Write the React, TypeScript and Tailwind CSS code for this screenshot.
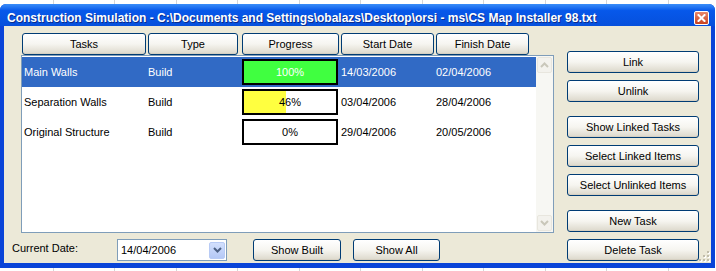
import clsx from "clsx";

const ui = "font-['Liberation_Sans',Arial,sans-serif]";

const gridCols = [54, 61, 62, 61, 62, 61, 62, 61, 62, 61, 62, 61];

const rows = [
  { name: "Main Walls", type: "Build", pct: 100, fill: "bg-[#40ff40]", start: "14/03/2006", finish: "02/04/2006", selected: true },
  { name: "Separation Walls", type: "Build", pct: 46, fill: "bg-[#ffff40]", start: "03/04/2006", finish: "28/04/2006", selected: false },
  { name: "Original Structure", type: "Build", pct: 0, fill: "bg-[#ffff40]", start: "29/04/2006", finish: "20/05/2006", selected: false },
];

function XpButton({ label, className }: { label: string; className?: string }) {
  return (
    <div
      className={clsx(
        "flex h-[22px] shrink-0 items-center justify-center rounded-[3px] border border-[#003c74] bg-linear-to-b from-white via-[#f6f5f0] to-[#dcd8cb] text-[11px] leading-none text-black shadow-[inset_0_-1px_0_#d6d0c2]",
        className,
      )}
    >
      {label}
    </div>
  );
}

function Chevron({ up, color }: { up?: boolean; color: string }) {
  return (
    <svg width="9" height="6" viewBox="0 0 9 6">
      <path d={up ? "M1 5 L4.5 1.5 L8 5" : "M1 1 L4.5 4.5 L8 1"} fill="none" stroke={color} strokeWidth="2" />
    </svg>
  );
}

export default function App() {
  return (
    <div className={clsx("relative h-[271px] w-[716px] overflow-hidden bg-white", ui)}>
      {/* spreadsheet behind the dialog */}
      <div className="flex h-full">
        {gridCols.map((w, i) => (
          <div key={i} className="h-full shrink-0 border-r border-[#d6d6d6]" style={{ width: w }} />
        ))}
      </div>

      {/* dialog window */}
      <div className="absolute left-0 top-[4px] flex w-[715px] flex-col rounded-t-[6px] bg-[#0a44d8]">
        {/* title bar */}
        <div className="flex h-[22px] items-center rounded-t-[6px] bg-linear-to-b from-[#3a8df8] via-[#0758ea] via-30% to-[#0650dc] pl-[7px] pr-[6px] pt-[5px]">
          <span className="flex-1 whitespace-nowrap text-[12px] font-bold leading-none text-white [text-shadow:1px_1px_0_#0a2c8c]">
            Construction Simulation - C:\Documents and Settings\obalazs\Desktop\orsi - ms\CS Map Installer 98.txt
          </span>
          <div className="flex h-[14px] w-[15px] items-center justify-center rounded-[2px] border border-white bg-linear-to-b from-[#e9876a] to-[#c8401c]">
            <svg width="9" height="8" viewBox="0 0 9 8">
              <path d="M1.5 1 L7.5 7 M7.5 1 L1.5 7" stroke="white" strokeWidth="2" strokeLinecap="square" />
            </svg>
          </div>
        </div>

        {/* client area */}
        <div className="relative mx-[4px] mb-[5px] flex h-[237px] flex-col bg-[#ece9d8] pl-[8px] pr-[12px]">
          <div className="flex">
            {/* task list */}
            <div className="ml-[9px] flex w-[533px] flex-col pt-[7px]">
              <div className="flex h-[22px] pl-[1px]">
                <XpButton label="Tasks" className="w-[124px]" />
                <XpButton label="Type" className="ml-[2px] w-[90px]" />
                <XpButton label="Progress" className="ml-[4px] w-[97px]" />
                <XpButton label="Start Date" className="ml-[2px] w-[93px]" />
                <XpButton label="Finish Date" className="ml-[2px] w-[93px]" />
              </div>
              <div className="flex h-[178px] border border-[#7f9db9] bg-white">
                <div className="flex flex-1 flex-col pt-[1px]">
                  {rows.map((r) => (
                    <div
                      key={r.name}
                      className={clsx(
                        "flex h-[30px] items-center text-[11px]",
                        r.selected ? "bg-[#316ac5] text-white" : "text-black",
                      )}
                    >
                      <div className="w-[126px] pl-[2px]">{r.name}</div>
                      <div className="w-[94px]">{r.type}</div>
                      <div className="relative flex h-[26px] w-[96px] items-center justify-center overflow-hidden border-2 border-black bg-white">
                        <div className={clsx("absolute inset-y-0 left-0", r.fill)} style={{ width: `${r.pct}%` }} />
                        <span className="relative">{r.pct}%</span>
                      </div>
                      <div className="ml-[3px] w-[95px]">{r.start}</div>
                      <div>{r.finish}</div>
                    </div>
                  ))}
                </div>
                {/* scrollbar */}
                <div className="flex w-[17px] flex-col justify-between bg-[#f7f7f3] px-[1px] pb-[1px] pt-[1px]">
                  <div className="flex h-[16px] items-center justify-center rounded-[2px] border border-[#e8e6de] bg-[#f3f2ed]">
                    <Chevron up color="#c9c7ba" />
                  </div>
                  <div className="flex h-[16px] items-center justify-center rounded-[2px] border border-[#e8e6de] bg-[#f3f2ed]">
                    <Chevron color="#c9c7ba" />
                  </div>
                </div>
              </div>
            </div>

            {/* actions */}
            <div className="ml-[13px] flex w-[132px] flex-col pt-[25px]">
              <XpButton label="Link" />
              <XpButton label="Unlink" className="mt-[7px]" />
              <XpButton label="Show Linked Tasks" className="mt-[14px]" />
              <XpButton label="Select Linked Items" className="mt-[7px]" />
              <XpButton label="Select Unlinked Items" className="mt-[7px]" />
              <XpButton label="New Task" className="mt-[14px]" />
            </div>
          </div>

          {/* bottom row */}
          <div className="mt-[6px] flex h-[22px] items-center">
            <div className="w-[105px] pb-[3px] text-[11px] text-black">Current Date:</div>
            <div className="flex h-[22px] w-[110px] items-center border border-[#7f9db9] bg-white pl-[3px] pr-[1px]">
              <span className="flex-1 text-[11px] text-black">14/04/2006</span>
              <div className="flex h-[17px] w-[16px] items-center justify-center rounded-[2px] border border-[#b8cbf5] bg-linear-to-b from-[#d3e0fd] to-[#b4c8f6]">
                <Chevron color="#4d6185" />
              </div>
            </div>
            <XpButton label="Show Built" className="ml-[26px] w-[88px]" />
            <XpButton label="Show All" className="ml-[12px] w-[87px]" />
            <XpButton label="Delete Task" className="ml-auto w-[132px]" />
          </div>

          {/* size grip */}
          <svg className="absolute bottom-[1px] right-[1px]" width="11" height="11" viewBox="0 0 11 11">
            {[
              [8, 0], [8, 4], [4, 4], [8, 8], [4, 8], [0, 8],
            ].map(([x, y]) => (
              <g key={`${x}-${y}`}>
                <rect x={x + 1} y={y + 1} width="2" height="2" fill="#ffffff" />
                <rect x={x} y={y} width="2" height="2" fill="#c1bdab" />
              </g>
            ))}
          </svg>
        </div>
      </div>
    </div>
  );
}
